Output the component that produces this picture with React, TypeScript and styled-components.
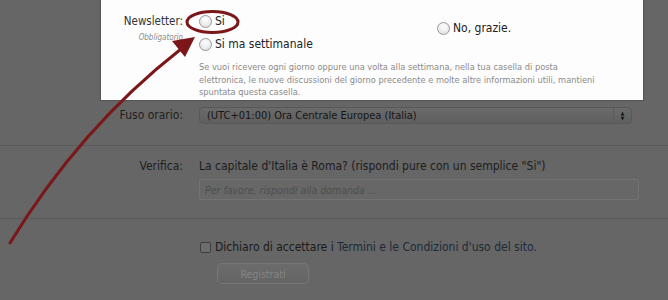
import React from "react";
import styled, { createGlobalStyle } from "styled-components";

const Global = createGlobalStyle`
  html, body { margin: 0; padding: 0; background: #666; }
  body { font-family: "DejaVu Sans Condensed", "DejaVu Sans", Tahoma, sans-serif; }
`;

const Page = styled.div`
  position: relative;
  width: 668px;
  height: 300px;
  overflow: hidden;
  background: #666666;
  color: #1c1c1c;
`;

const Spotlight = styled.div`
  margin-left: 101px;
  width: 542px;
  height: 100px;
  box-sizing: border-box;
  background: #fdfdfd;
  box-shadow: 0 0 1px 1px rgba(0, 0, 0, 0.15);
  display: grid;
  grid-template-columns: 82px 1fr;
  column-gap: 16px;
  padding-top: 13px;
`;

const LabelCol = styled.div`
  text-align: right;
`;

const MainLabel = styled.div`
  font-size: 11.5px;
  line-height: 17px;
  color: #333;
`;

const Hint = styled.div`
  font-size: 8px;
  font-style: italic;
  color: #8a8a8a;
  line-height: 10px;
  margin-top: 3px;
`;

const Options = styled.div`
  display: grid;
  grid-template-columns: 238px 1fr;
`;

const OptionCol = styled.div<{ $offset?: number }>`
  display: flex;
  flex-direction: column;
  gap: 6px;
  padding-top: ${(p) => p.$offset ?? 0}px;
`;

const Option = styled.label`
  display: flex;
  align-items: center;
  gap: 3px;
  font-size: 12px;
  line-height: 17px;
  color: #222;
`;

const Radio = styled.span`
  width: 11px;
  height: 11px;
  border-radius: 50%;
  border: 1px solid #9a9a9a;
  background: radial-gradient(circle at 50% 35%, #ffffff 0%, #e6e6e6 70%, #cfcfcf 100%);
  flex: none;
`;

const Description = styled.p`
  grid-column: 2;
  margin: 7px 0 0;
  font-size: 9.2px;
  line-height: 12.5px;
  color: #8a8a8a;
`;

const Field = styled.div<{ $top: number; $height: number; $divider?: boolean }>`
  display: grid;
  grid-template-columns: 183px 1fr;
  column-gap: 16px;
  box-sizing: border-box;
  padding-top: ${(p) => p.$top}px;
  height: ${(p) => p.$height}px;
  border-bottom: ${(p) => (p.$divider ? "1px solid #5a5a5a" : "none")};
`;

const FieldLabel = styled.div`
  text-align: right;
  font-size: 12px;
  line-height: 17px;
  color: #1e1e1e;
`;

const Select = styled.div`
  width: 433px;
  height: 17px;
  box-sizing: border-box;
  display: flex;
  align-items: center;
  border: 1px solid #585858;
  border-radius: 4px;
  background: linear-gradient(#6a6a6a, #5f5f5f);
  font-size: 11px;
  color: #161616;
  padding-left: 7px;
`;

const SelectText = styled.span`
  flex: 1;
`;

const SelectArrows = styled.span`
  width: 17px;
  align-self: stretch;
  display: flex;
  flex-direction: column;
  align-items: center;
  justify-content: center;
  border-left: 1px solid #5c5c5c;
  font-size: 5px;
  line-height: 5px;
  color: #111;
`;

const Question = styled.div`
  font-size: 12px;
  line-height: 17px;
  color: #1c1c1c;
`;

const Input = styled.div`
  margin-top: 4px;
  width: 440px;
  height: 21px;
  box-sizing: border-box;
  border: 1px solid #737373;
  border-radius: 2px;
  background: #676767;
  padding-left: 5px;
  display: flex;
  align-items: center;
  font-size: 10.5px;
  font-style: italic;
  color: #4e4e4e;
`;

const CheckRow = styled.div`
  display: flex;
  align-items: center;
  gap: 4px;
  margin: 20px 0 0 200px;
  font-size: 12px;
  line-height: 17px;
  color: #1a1a1a;
`;

const Checkbox = styled.span`
  width: 11px;
  height: 11px;
  box-sizing: border-box;
  border: 1px solid #3e3e3e;
  border-radius: 2px;
  background: #6c6c6c;
`;

const Link = styled.span`
  color: #1d2a36;
`;

const Button = styled.div`
  margin: 7px 0 0 217px;
  width: 92px;
  height: 21px;
  box-sizing: border-box;
  border: 1px solid #777;
  border-radius: 5px;
  background: linear-gradient(#6c6c6c, #646464);
  display: flex;
  align-items: center;
  justify-content: center;
  font-size: 10.5px;
  color: #858585;
`;

const Annotation = styled.svg`
  position: absolute;
  left: 0;
  top: 0;
  pointer-events: none;
`;

export default function App() {
  return (
    <Page>
      <Global />
      <Spotlight>
        <LabelCol>
          <MainLabel>Newsletter:</MainLabel>
          <Hint>Obbligatorio</Hint>
        </LabelCol>
        <Options>
          <OptionCol>
            <Option>
              <Radio />
              Si
            </Option>
            <Option>
              <Radio />
              Si ma settimanale
            </Option>
          </OptionCol>
          <OptionCol $offset={7}>
            <Option>
              <Radio />
              No, grazie.
            </Option>
          </OptionCol>
        </Options>
        <Description>
          Se vuoi ricevere ogni giorno oppure una volta alla settimana, nella tua casella di posta
          <br />
          elettronica, le nuove discussioni del giorno precedente e molte altre informazioni utili, mantieni
          <br />
          spuntata questa casella.
        </Description>
      </Spotlight>

      <Field $top={7} $height={46} $divider>
        <FieldLabel>Fuso orario:</FieldLabel>
        <div>
          <Select>
            <SelectText>(UTC+01:00) Ora Centrale Europea (Italia)</SelectText>
            <SelectArrows>
              <span>▲</span>
              <span>▼</span>
            </SelectArrows>
          </Select>
        </div>
      </Field>

      <Field $top={12} $height={73} $divider>
        <FieldLabel>Verifica:</FieldLabel>
        <div>
          <Question>La capitale d'Italia è Roma? (rispondi pure con un semplice "Si")</Question>
          <Input>Per favore, rispondi alla domanda ...</Input>
        </div>
      </Field>

      <CheckRow>
        <Checkbox />
        <span>
          Dichiaro di accettare i <Link>Termini e le Condizioni d'uso del sito.</Link>
        </span>
      </CheckRow>

      <Button>Registrati</Button>

      <Annotation width="668" height="300" viewBox="0 0 668 300">
        <ellipse cx="212.5" cy="22" rx="25.5" ry="10.5" fill="none" stroke="#7b1719" strokeWidth="3" />
        <path d="M10 243 Q80 128 181 49" fill="none" stroke="#7b1719" strokeWidth="3" strokeLinecap="round" />
        <polygon points="195,37 185,57 172,41" fill="#7b1719" />
      </Annotation>
    </Page>
  );
}
